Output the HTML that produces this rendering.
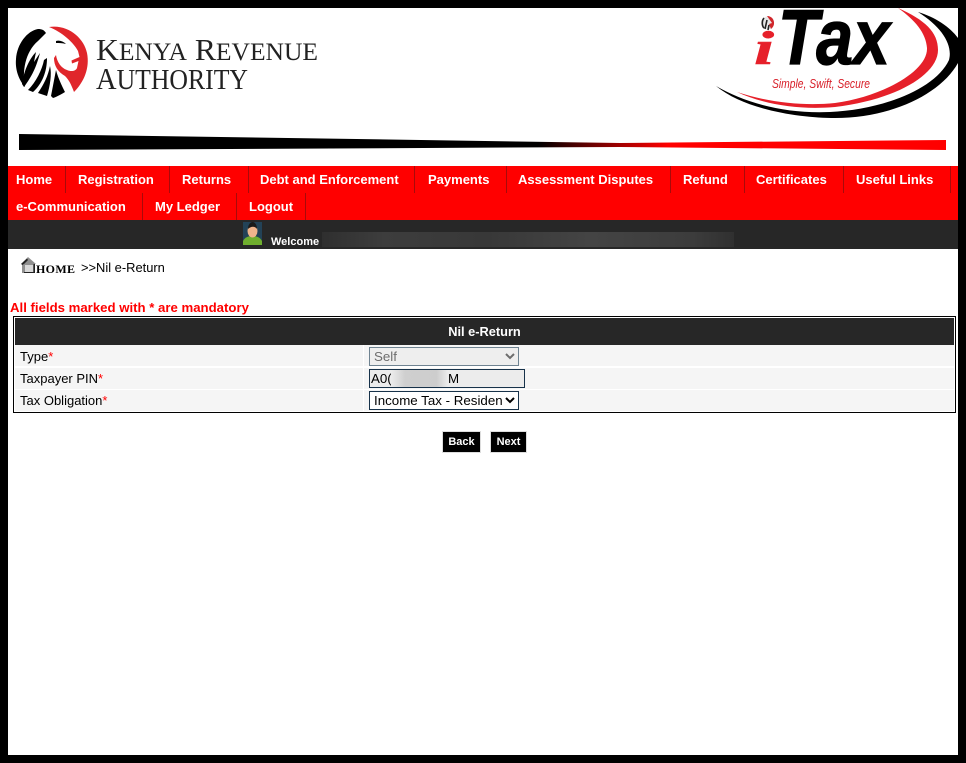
<!DOCTYPE html>
<html lang="en">
<head>
<meta charset="utf-8">
<title>Nil e-Return</title>
<style>
html,body{margin:0;padding:0;background:#000;}
body{position:relative;width:966px;height:763px;overflow:hidden;font-family:"Liberation Sans",Arial,sans-serif;}
#page{position:absolute;left:8px;top:8px;width:950px;height:747px;background:#fff;overflow:hidden;}
.abs{position:absolute;}
#art{position:absolute;left:-8px;top:-8px;width:966px;height:170px;}
.row{position:absolute;left:0;height:27px;width:950px;background:#f00;}
.row a{position:absolute;top:0;height:27px;line-height:27px;color:#fff;font-weight:bold;font-size:13px;text-decoration:none;white-space:nowrap;}
.sep{position:absolute;top:0;width:1px;height:27px;background:#a80a0a;}
#bar{position:absolute;left:0;top:212px;width:950px;height:29px;background:#272727;}
#blur{position:absolute;left:314px;top:12px;width:412px;height:15px;background:linear-gradient(90deg,#2f2f2f,#3d3d3d 15%,#383838 40%,#444 65%,#3c3c3c 90%,#303030);}
#welcome{position:absolute;left:263px;top:16px;font-size:11px;font-weight:bold;color:#fff;line-height:13px;}
#crumb{position:absolute;left:73px;top:252px;font-size:12.9px;line-height:15px;color:#000;white-space:nowrap;}
#home{position:absolute;left:28px;top:254px;font:bold 12px/14px "Liberation Serif",serif;color:#000;letter-spacing:.35px;}
#must{position:absolute;left:2px;top:292px;font-size:13.2px;line-height:16px;font-weight:bold;color:#f00;white-space:nowrap;}
#frame{position:absolute;left:5px;top:308px;width:941px;height:95px;border:1px solid #000;background:#fff;}
#head{position:absolute;left:1px;top:1px;width:939px;height:27px;background:#272727;color:#fff;font-weight:bold;font-size:12.8px;line-height:27px;text-align:center;}
.tr{position:absolute;left:1px;width:939px;height:21px;background:#f5f5f5;}
.lab{position:absolute;left:5px;top:0;line-height:21px;font-size:13px;color:#000;white-space:nowrap;}
.lab b{font-weight:normal;color:#f00;}
.split{position:absolute;left:348px;top:0;width:1px;height:21px;background:#fff;}
select,input{font-family:"Liberation Sans",Arial,sans-serif;font-size:13.33px;box-sizing:border-box;margin:0;position:absolute;}
#s1{left:361px;top:339px;width:150px;height:19px;background:#eee;color:#6d6d6d;border:1px solid #6f8391;padding-left:0;opacity:1;}
#i1{left:361px;top:361px;width:156px;height:19px;background:#ececec;color:#000;border:1px solid #17324a;padding:0 1px;}
#s2{left:361px;top:383px;width:150px;height:19px;background:#fff;color:#000;border:1px solid #17324a;padding-left:0;}
#mask{position:absolute;left:383px;top:362px;width:57px;height:17px;background:linear-gradient(90deg,#ececec,#cfcfcf 25%,#cdcdcd 80%,#ececec);}
#m{position:absolute;left:440px;top:362px;font-size:13.33px;line-height:17px;color:#000;}
.btn{position:absolute;top:423px;height:22px;box-sizing:border-box;background:#000;color:#fff;border:1px solid #ddd;font:bold 11px/20px "Liberation Sans",Arial,sans-serif;padding:0;text-align:center;}
</style>
</head>
<body>
<div id="page">
<svg id="art" viewBox="0 0 966 170" xmlns="http://www.w3.org/2000/svg">
<defs>
<linearGradient id="g" x1="0" x2="1" y1="0" y2="0">
<stop offset="0" stop-color="#000"/><stop offset=".56" stop-color="#000"/><stop offset=".7" stop-color="#f00"/><stop offset="1" stop-color="#f00"/>
</linearGradient>
</defs>
<!-- KRA lion -->
<path fill="#e0262b" d="M49,27 C68,24 84,38 87,53 C90,68 84,82 74,92 C71,84 69,80 65,76 C58,72 54,66 54,58 L56,55 C57,62 61,68 67,70 C71,72 76,71 77,68 L78.5,61 L72,63.5 L71.5,60.5 L79.5,57 L78,51 C74,43 62,32 49,27Z"/>
<path fill="#000" d="M38,29 C27,31 17,44 16,59 C15,70 19,80 25,87 C22,72 25,52 38,41 L46,33 C44,30 42,29 38,29Z"/>
<path fill="#000" d="M22,84 C24,70 30,58 36,52 L34,62 L40,53 C36,68 32,76 24,87Z M28,90 C36,82 42,70 44,60 L47,58 C47,72 42,84 33,92Z M38,93 C44,84 48,76 50,66 C52,74 50,86 47,96Z M51,96 L56,70 C58,78 63,88 65,92 C60,95 56,97 53,98Z"/>
<path fill="#000" d="M56,41 C59,40 63,41 66,44 C62,43 59,43 56,43Z"/>
<text x="96" y="60" font-family="Liberation Serif,serif" font-size="31" textLength="222" lengthAdjust="spacingAndGlyphs" fill="#222">K<tspan font-size="25">ENYA</tspan> R<tspan font-size="25">EVENUE</tspan></text>
<text x="96" y="89" font-family="Liberation Serif,serif" font-size="31" textLength="152" lengthAdjust="spacingAndGlyphs" fill="#222">A<tspan font-size="28">UTHORITY</tspan></text>
<!-- iTax swooshes -->
<path fill="#000" d="M716,86 C745,110 800,118 835,118 C890,118 940,95 958,63 L958,38 C950,27 935,17 918,12 C942,27 953,45 949,60 C935,90 880,110 830,112 C785,114 745,103 716,86Z"/>
<path fill="#e6202a" d="M898,8 C925,20 938,32 938,50 C938,75 895,100 835,107 C800,110 765,105 737,92 C770,103 805,106 835,103 C880,97 928,72 927,48 C926,33 915,20 898,8Z"/>
<text x="778" y="64" font-family="Liberation Sans,sans-serif" font-weight="bold" font-style="italic" font-size="78" textLength="112" lengthAdjust="spacingAndGlyphs" fill="#000" stroke="#000" stroke-width="1.2">Tax</text>
<text x="754" y="64" font-family="Liberation Serif,serif" font-weight="bold" font-style="italic" font-size="48" textLength="20" lengthAdjust="spacingAndGlyphs" fill="#e6202a" stroke="#e6202a" stroke-width=".6">i</text>
<circle cx="767.5" cy="23" r="6.5" fill="#e8e8e8"/>
<path fill="#d0262b" d="M767,16 C772,16 774.5,20 774,24 C773.5,27 772,28 771,29 L769,24 L772,23 Z"/>
<path fill="none" stroke="#222" stroke-width="1.6" d="M764,18 C761.5,21 762,26 764,28 M767,20 L765,29 M769,25 L768,30"/>
<text x="772" y="88" font-family="Liberation Sans,sans-serif" font-style="italic" font-size="12.5" textLength="98" lengthAdjust="spacingAndGlyphs" fill="#d8202a">Simple, Swift, Secure</text>
<!-- Divider wedge -->
<path fill="url(#g)" d="M19,134 L620,143 L946,140 L946,150 L620,147 L19,150Z"/>
</svg>

<div class="row" style="top:158px">
<a style="left:8px">Home</a><span class="sep" style="left:57px"></span>
<a style="left:70px">Registration</a><span class="sep" style="left:161px"></span>
<a style="left:174px">Returns</a><span class="sep" style="left:240px"></span>
<a style="left:252px">Debt and Enforcement</a><span class="sep" style="left:406px"></span>
<a style="left:420px">Payments</a><span class="sep" style="left:498px"></span>
<a style="left:510px">Assessment Disputes</a><span class="sep" style="left:662px"></span>
<a style="left:675px">Refund</a><span class="sep" style="left:736px"></span>
<a style="left:748px">Certificates</a><span class="sep" style="left:835px"></span>
<a style="left:848px">Useful Links</a><span class="sep" style="left:942px"></span>
</div>
<div class="row" style="top:185px">
<a style="left:8px">e-Communication</a><span class="sep" style="left:134px"></span>
<a style="left:147px">My Ledger</a><span class="sep" style="left:228px"></span>
<a style="left:241px">Logout</a><span class="sep" style="left:297px"></span>
</div>

<div id="bar">
<svg class="abs" style="left:235px;top:2px" width="19" height="23" viewBox="0 0 19 23">
<rect width="19" height="23" fill="#234257"/>
<path fill="#6fae2e" d="M0,23 L0,19 C2,15 6,14 9.5,14 C13,14 17,15 19,19 L19,23Z"/>
<ellipse cx="9.5" cy="9" rx="5" ry="6.5" fill="#f0b48c"/>
<path fill="#1a1a1a" d="M5,7 C5,2 8,0 9.5,0 C12,0 14,3 14,7 C12,4 8,4 5,7Z"/>
</svg>
<div id="welcome">Welcome</div>
<div id="blur"></div>
</div>

<svg class="abs" style="left:12px;top:249px" width="17" height="17" viewBox="0 0 17 17">
<path fill="#8f8f8f" d="M8,0 L16,7 L14,7 L14,16 L4,16 L4,7 L1,7Z"/>
<path fill="#222" d="M1,7 L7,1.5 L8,3 L3.5,7.5 L3.5,16 L2.5,16 L2.5,8 Z M4,15 L14,15 L14,16 L4,16Z M13.5,7 L15,7 L15,16 L13.5,16Z"/>
<rect x="5" y="8" width="8" height="7" fill="#d8d8d8"/>
</svg>
<div id="home">HOME</div>
<div id="crumb">&gt;&gt;Nil e-Return</div>

<div id="must">All fields marked with * are mandatory</div>

<div id="frame">
<div id="head">Nil e-Return</div>
<div class="tr" style="top:28px"><span class="lab" style="top:1px">Type<b>*</b></span><span class="split"></span></div>
<div class="tr" style="top:51px"><span class="lab">Taxpayer PIN<b>*</b></span><span class="split"></span></div>
<div class="tr" style="top:73px"><span class="lab">Tax Obligation<b>*</b></span><span class="split"></span></div>
</div>

<select id="s1" disabled><option>Self</option></select>
<input id="i1" type="text" value="A0(" readonly>
<div id="mask"></div>
<div id="m">M</div>
<select id="s2"><option>Income Tax - Resident Individual</option></select>

<button class="btn" style="left:434px;width:39px">Back</button>
<button class="btn" style="left:482px;width:37px">Next</button>
</div>
</body>
</html>
